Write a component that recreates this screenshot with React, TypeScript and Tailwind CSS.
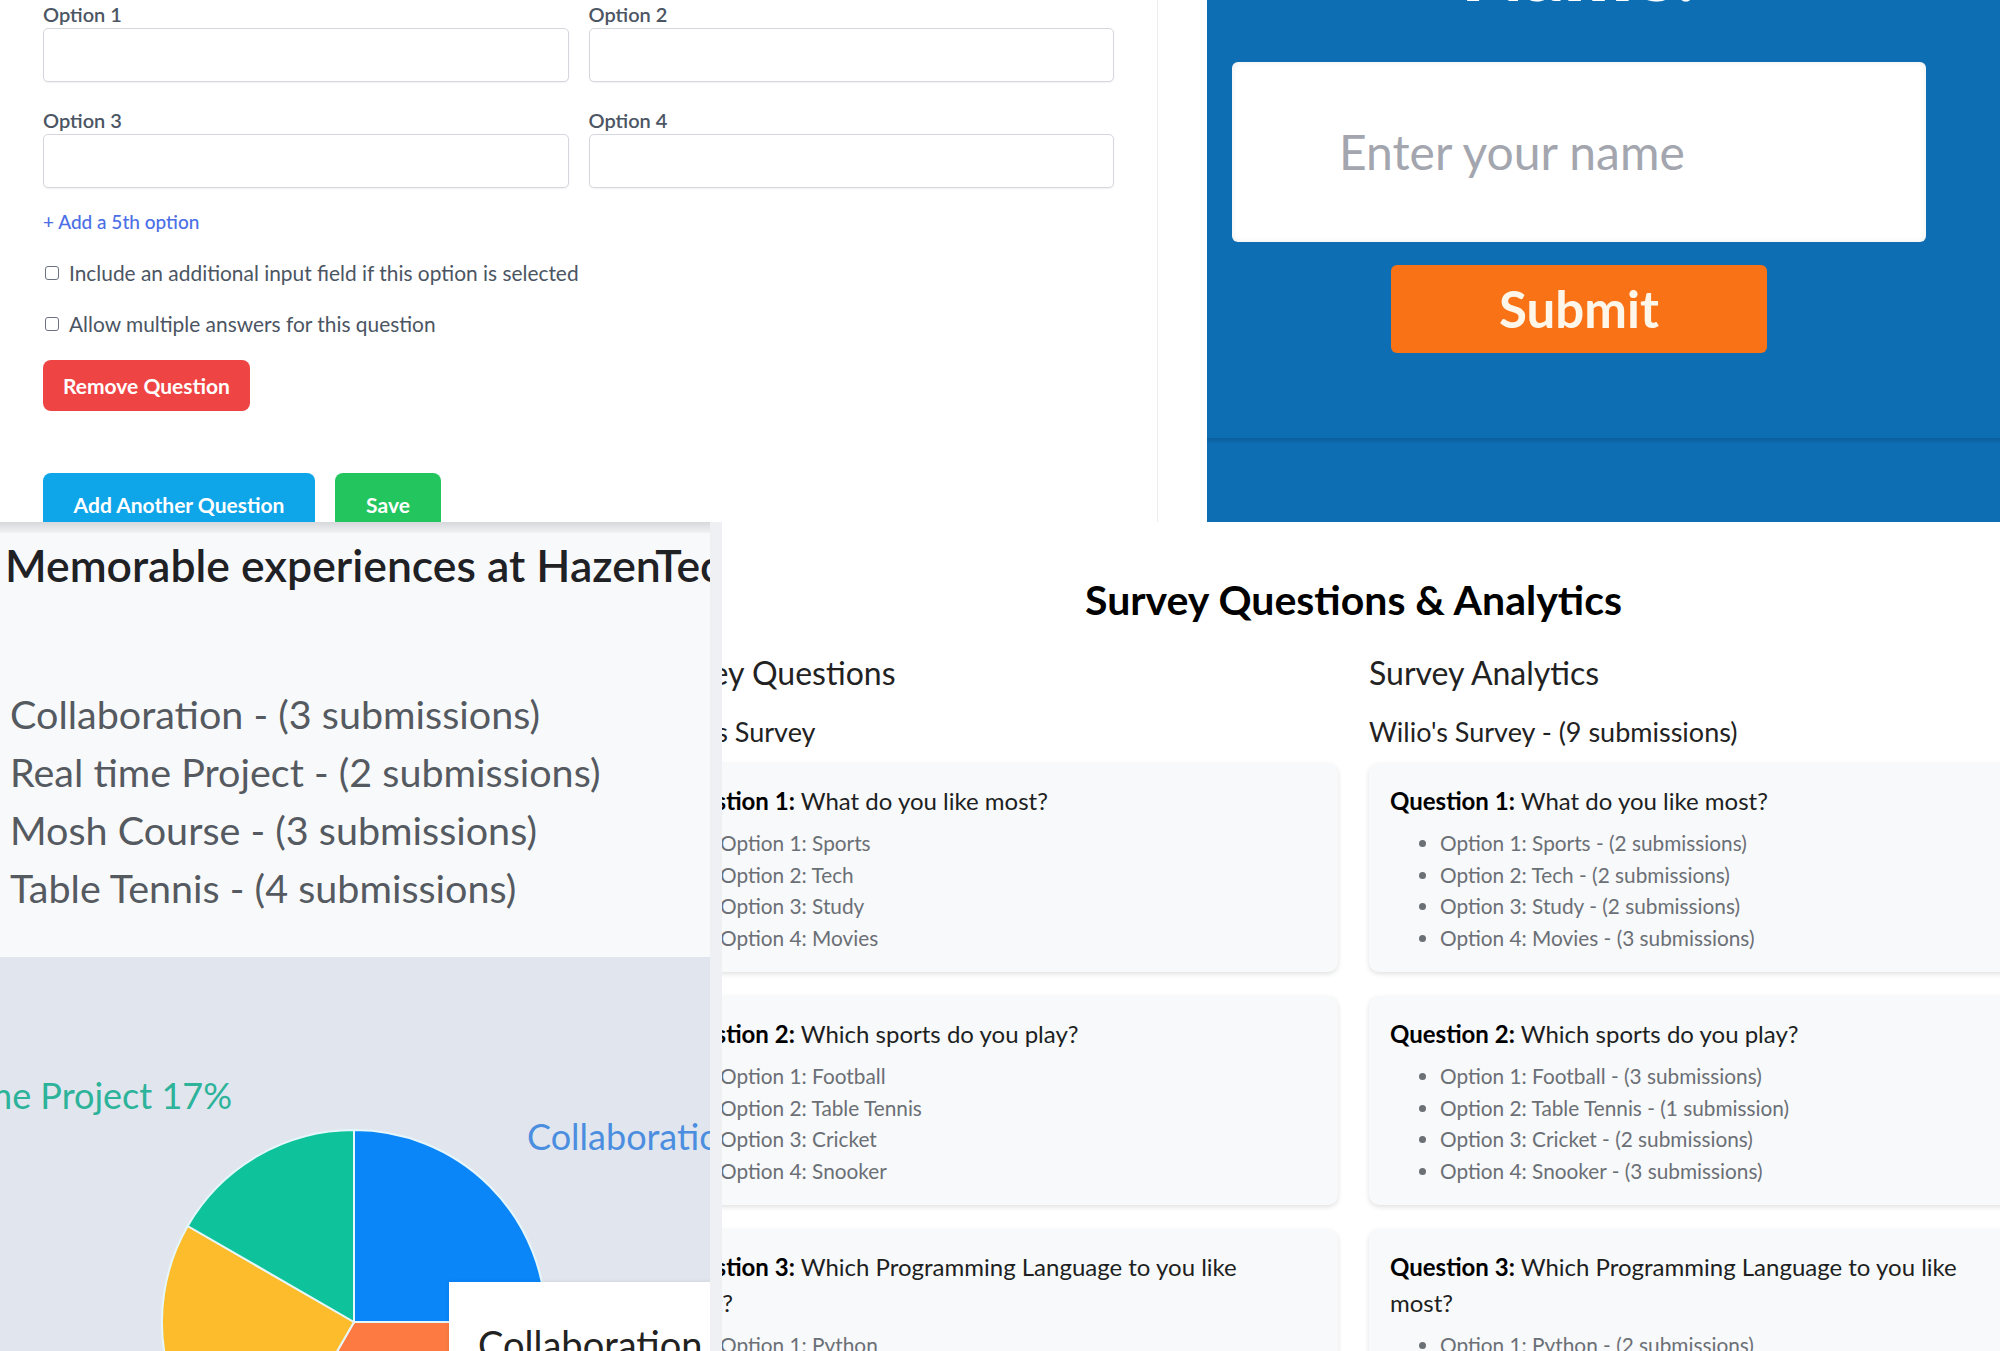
import React from 'react';

const questionCards = [
  {
    no: 1,
    text: 'What do you like most?',
    options: [
      ['Sports', '2 submissions'],
      ['Tech', '2 submissions'],
      ['Study', '2 submissions'],
      ['Movies', '3 submissions'],
    ],
  },
  {
    no: 2,
    text: 'Which sports do you play?',
    options: [
      ['Football', '3 submissions'],
      ['Table Tennis', '1 submission'],
      ['Cricket', '2 submissions'],
      ['Snooker', '3 submissions'],
    ],
  },
  {
    no: 3,
    text: 'Which Programming Language to you like most?',
    options: [
      ['Python', '2 submissions'],
      ['JavaScript', '3 submissions'],
      ['Java', '2 submissions'],
      ['C++', '2 submissions'],
    ],
  },
];

const experiences = [
  'Collaboration - (3 submissions)',
  'Real time Project - (2 submissions)',
  'Mosh Course - (3 submissions)',
  'Table Tennis - (4 submissions)',
];

function OptionField({ label }: { label: string }) {
  return (
    <div className="flex flex-col">
      <label className="text-[20px] leading-[24px] font-semibold text-[#4b5563]">{label}</label>
      <input className="mt-[2px] h-[54px] rounded-[5px] border border-[#d4d7dc] bg-white shadow-[0_1px_2px_rgba(0,0,0,0.06)]" />
    </div>
  );
}

function FakeCheckbox({ label }: { label: string }) {
  return (
    <div className="flex items-center gap-[10px] text-[20.9px] leading-[24px] text-[#4b5563]">
      <span className="ml-[2px] h-[14px] w-[14px] rounded-[3px] border border-[#6b7280] bg-white" />
      <span>{label}</span>
    </div>
  );
}

function QuestionForm() {
  return (
    <div className="h-[522px] w-[1158px] shrink-0 border-r border-[#ececec] bg-white px-[43px] pt-[2px]">
      <div className="grid grid-cols-2 gap-x-[20px] gap-y-[26px]">
        <OptionField label="Option 1" />
        <OptionField label="Option 2" />
        <OptionField label="Option 3" />
        <OptionField label="Option 4" />
      </div>
      <div className="mt-[22px] text-[19px] leading-[24px] font-medium text-[#4c6fe6]">+ Add a 5th option</div>
      <div className="mt-[27px] flex flex-col gap-[27px]">
        <FakeCheckbox label="Include an additional input field if this option is selected" />
        <FakeCheckbox label="Allow multiple answers for this question" />
      </div>
      <button className="mt-[24px] h-[51px] w-[207px] rounded-[8px] bg-[#ef4444] text-[21px] font-bold text-white">
        Remove Question
      </button>
      <div className="mt-[62px] flex gap-[20px]">
        <button className="h-[62px] w-[272px] rounded-[8px] bg-[#0ea5e9] pt-[2px] text-[21px] font-bold text-white">
          Add Another Question
        </button>
        <button className="h-[62px] w-[106px] rounded-[8px] bg-[#22c55e] pt-[2px] text-[21px] font-bold text-white">
          Save
        </button>
      </div>
    </div>
  );
}

function NamePanel() {
  return (
    <div className="flex h-[522px] flex-1 flex-col overflow-hidden bg-[#0e6eb4]">
      <div className="ml-[25px] flex w-[694px] flex-col items-center">
        <h1 className="mt-[-67px] h-[73px] text-[80px] leading-[74px] font-extrabold text-white">Name:</h1>
        <div className="mt-[56px] flex h-[180px] w-full items-center rounded-[6px] bg-white pl-[107px] shadow-[inset_0_0_6px_rgba(0,0,0,0.08)]">
          <span className="text-[48px] text-[#a3a6ae]">Enter your name</span>
        </div>
        <button className="mt-[23px] h-[88px] w-[376px] rounded-[6px] bg-[#f97316] text-[51px] font-bold text-[#fff6ea]">
          Submit
        </button>
      </div>
      <div className="mt-[85px] h-[6px] bg-gradient-to-b from-[#0b5d99] to-[#0e6eb4]" />
    </div>
  );
}

function PieChart() {
  const cx = 354;
  const cy = 365;
  const r = 192;
  const pt = (deg: number) => {
    const a = (deg * Math.PI) / 180;
    return `${(cx + r * Math.sin(a)).toFixed(1)} ${(cy - r * Math.cos(a)).toFixed(1)}`;
  };
  const slice = (from: number, to: number) =>
    `M ${cx} ${cy} L ${pt(from)} A ${r} ${r} 0 ${to - from > 180 ? 1 : 0} 1 ${pt(to)} Z`;

  return (
    <svg width="710" height="394" className="block">
      <path d={slice(0, 90)} fill="#0a86f9" stroke="#e6f7fb" strokeWidth="2" />
      <path d={slice(90, 210)} fill="#fd7b43" stroke="#e6f7fb" strokeWidth="2" />
      <path d={slice(210, 300)} fill="#fcbc2b" stroke="#e6f7fb" strokeWidth="2" />
      <path d={slice(300, 360)} fill="#0ec39c" stroke="#e6f7fb" strokeWidth="2" />
      <text x="232" y="152" textAnchor="end" fontSize="36" fill="#2db39a" fontFamily="Lato, sans-serif">
        Real time Project 17%
      </text>
      <text x="527" y="193" fontSize="36" fill="#4b8ee0" fontFamily="Lato, sans-serif">
        Collaboration 25%
      </text>
    </svg>
  );
}

function ExperiencePanel() {
  return (
    <div className="flex w-[710px] shrink-0 flex-col overflow-hidden bg-[#f8f9fb]">
      <div className="h-[11px] bg-gradient-to-b from-[#d6d8db] to-[#f1f2f4]" />
      <h2 className="mt-[10px] whitespace-nowrap pl-[5px] text-[44.5px] leading-[44px] font-semibold text-[#1f2125]">
        Memorable experiences at HazenTech
      </h2>
      <ul className="mt-[98px] pl-[10px] text-[39.5px] leading-[58px] text-[#555a61]">
        {experiences.map(item => (
          <li key={item} className="whitespace-nowrap">{item}</li>
        ))}
      </ul>
      <div className="relative mt-[40px] flex-1 overflow-hidden bg-[#e1e6ee]">
        <PieChart />
        <div className="absolute left-[449px] top-[325px] h-[120px] w-[320px] bg-white pl-[29px] pt-[34px] shadow-[0_0_4px_rgba(0,0,0,0.1)]">
          <span className="whitespace-nowrap text-[38px] text-[#222]">Collaboration</span>
        </div>
      </div>
    </div>
  );
}

function SurveyCard({ q, withCounts }: { q: (typeof questionCards)[number]; withCounts: boolean }) {
  return (
    <div className="rounded-[10px] bg-[#f8f9fa] pb-[19px] pl-[21px] pr-[60px] pt-[20px] shadow-[0_2px_5px_rgba(0,0,0,0.12)]">
      <p className="text-[24px] leading-[36px] text-[#1d1f22]">
        <span className="font-bold text-black">Question {q.no}:</span> {q.text}
      </p>
      <ul className="mt-[8px] list-disc pl-[50px] text-[20.8px] leading-[31.5px] text-[#6b6f76]">
        {q.options.map(([name, count], i) => (
          <li key={name}>
            Option {i + 1}: {name}
            {withCounts ? ` - (${count})` : ''}
          </li>
        ))}
      </ul>
    </div>
  );
}

function SurveyColumn({ heading, sub, withCounts }: { heading: string; sub: string; withCounts: boolean }) {
  return (
    <div className="flex w-[689px] shrink-0 flex-col">
      <h3 className="text-[32px] leading-[40px] text-[#222]">{heading}</h3>
      <h4 className="mt-[22px] text-[27px] leading-[34px] text-[#222]">{sub}</h4>
      <div className="mt-[14px] flex flex-col gap-[24px]">
        {questionCards.map(q => (
          <SurveyCard key={q.no} q={q} withCounts={withCounts} />
        ))}
      </div>
    </div>
  );
}

function SurveyPanel() {
  return (
    <div className="flex-1 overflow-hidden bg-white">
      <div className="ml-[-73px] flex w-[1409px] flex-col pt-[52px]">
        <h2 className="text-center text-[41px] leading-[52px] font-bold text-black">Survey Questions &amp; Analytics</h2>
        <div className="mt-[27px] flex gap-[31px]">
          <SurveyColumn heading="Survey Questions" sub="Wilio's Survey" withCounts={false} />
          <SurveyColumn heading="Survey Analytics" sub="Wilio's Survey - (9 submissions)" withCounts />
        </div>
      </div>
    </div>
  );
}

export default function App() {
  return (
    <div className="flex h-[1351px] w-[2000px] flex-col overflow-hidden bg-white font-['Lato',sans-serif]">
      <div className="flex h-[522px] shrink-0">
        <QuestionForm />
        <div className="w-[49px] shrink-0 bg-white" />
        <NamePanel />
      </div>
      <div className="flex min-h-0 flex-1">
        <div className="flex w-[710px] shrink-0 flex-col">
          <ExperiencePanel />
        </div>
        <div className="w-[12px] shrink-0 bg-[#eef0f3]" />
        <SurveyPanel />
      </div>
    </div>
  );
}
